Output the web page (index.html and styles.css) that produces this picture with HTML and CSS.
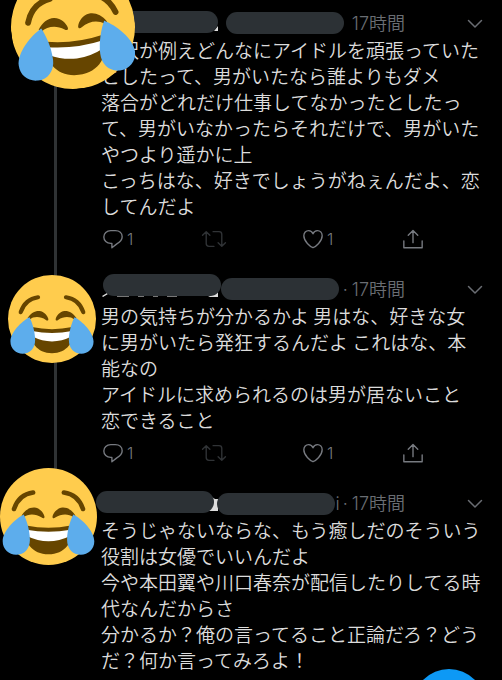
FILE: index.html
```html
<!DOCTYPE html>
<html lang="ja">
<head>
<meta charset="utf-8">
<meta name="viewport" content="width=device-width, initial-scale=1">
<title>スレッド</title>
<link rel="stylesheet" href="styles.css">
</head>
<body>
<svg class="defs" aria-hidden="true">
  <symbol id="joy" viewBox="0 0 36 36">
    <circle cx="18" cy="18" r="18" fill="#ffcc4d"/>
    <g fill="none" stroke="#664500" stroke-width="1.7" stroke-linecap="round">
      <path d="M5.2 15.2Q7 9.8 12.3 9.1"/>
      <path d="M30.8 15.2Q29 9.8 23.7 9.1"/>
    </g>
    <path fill="#664500" d="M8 17.6C9.3 15.6 11 14.6 12.8 14.7C14.9 14.9 16.2 16.7 16.5 18C16.6 18.7 16 18.8 15.5 18.4C13.2 16.8 10.5 16.9 8.8 18.2ZM28 17.6C26.7 15.6 25 14.6 23.2 14.7C21.1 14.9 19.8 16.7 19.5 18C19.4 18.7 20 18.8 20.5 18.4C22.8 16.8 25.5 16.9 27.2 18.2Z"/>
    <path fill="#664500" d="M9.7 21.3Q18 23 26.3 21.3C27.6 27.5 24 32 18 32S8.4 27.5 9.7 21.3Z"/>
    <path fill="#fff" d="M9.8 22.9Q18 24.5 26.2 22.9L26 25.2Q22 27.2 18 27.2T10 25.2Z"/>
    <path fill="#5dadec" d="M8.8 17.3C5.5 19 1 23.5 1 27.2C1 30.2 3.3 32.2 6 32.2C9 32.2 11.1 29.9 11.1 26.7C11.1 23 9.8 19.2 8.8 17.3ZM27.2 17.3C30.5 19 35 23.5 35 27.2C35 30.2 32.7 32.2 30 32.2C27 32.2 24.9 29.9 24.9 26.7C24.9 23 26.2 19.2 27.2 17.3Z"/>
  </symbol>
  <symbol id="reply" viewBox="0 0 24 24">
    <path d="M9.5 2.8H14.5C18.9 2.8 22 5.6 22 9.6C22 13.5 19.5 15.5 16.2 17.3L10.8 21.6V16.8H9.5C5.1 16.8 2 13.8 2 9.8S5.1 2.8 9.5 2.8Z"/>
  </symbol>
  <symbol id="retweet" viewBox="0 0 28 24">
    <path d="M1.5 8L5.5 4L9.5 8M5.5 4.5V17Q5.5 20 8.5 20H14M13 4H19.5Q22.5 4 22.5 7V19.5M18.5 16L22.5 20L26.5 16"/>
  </symbol>
  <symbol id="heart" viewBox="0 0 24 24">
    <path d="M12 21.5C9 20.5 2 14.5 2 8.5C2 5 4.3 2.8 7.2 2.8C9.4 2.8 11.2 4.2 12 6.3C12.8 4.2 14.6 2.8 16.8 2.8C19.7 2.8 22 5 22 8.5C22 14.5 15 20.5 12 21.5Z"/>
  </symbol>
  <symbol id="share" viewBox="0 0 24 24">
    <path d="M12 16V2.8M6.8 8L12 2.8L17.2 8M2 14V21.5H22V14"/>
  </symbol>
  <symbol id="chevron" viewBox="0 0 16 10">
    <path d="M1.500 1.500L8 8L14.500 1.500"/>
  </symbol>
</svg>

<main class="thread">
  <article class="tweet">
    <svg class="face face-large" role="img" aria-label="😂"><use href="#joy"/></svg>
    <header class="head">
      <svg class="scrap" viewBox="0 0 240 26" aria-hidden="true"><path fill="#ddd" d="M113 21L117 16V21Z"/></svg>
      <span class="mask mask-a"></span><span class="mask mask-b"></span>
      <time class="time">17時間</time>
      <button class="more" aria-label="メニュー"><svg><use href="#chevron"/></svg></button>
    </header>
    <p class="text">　沢が例えどんなにアイドルを頑張っていた<br>としたって、男がいたなら誰よりもダメ<br>落合がどれだけ仕事してなかったとしたっ<br>て、男がいなかったらそれだけで、男がいた<br>やつより遥かに上<br>こっちはな、好きでしょうがねぇんだよ、恋<br>してんだよ</p>
    <footer class="actions">
      <button class="action" aria-label="返信"><svg><use href="#reply"/></svg>1</button>
      <button class="action dim" aria-label="リツイート"><svg class="wide"><use href="#retweet"/></svg></button>
      <button class="action" aria-label="いいね"><svg><use href="#heart"/></svg>1</button>
      <button class="action" aria-label="共有"><svg><use href="#share"/></svg></button>
    </footer>
  </article>

  <article class="tweet">
    <svg class="face face-small" role="img" aria-label="😂"><use href="#joy"/></svg>
    <header class="head">
      <svg class="scrap" viewBox="0 0 240 26" aria-hidden="true"><path fill="#ddd" d="M1 20L6 17L7 18L2 21ZM107 21L117 16V21Z"/><path fill="#777" d="M16 20H28V21H16ZM37 20H43V21H37ZM52 20H57V21H52ZM66 20H76V21H66Z"/></svg>
      <span class="mask mask-c"></span><span class="mask mask-d"></span>
      <span class="dot">·</span>
      <time class="time">17時間</time>
      <button class="more" aria-label="メニュー"><svg><use href="#chevron"/></svg></button>
    </header>
    <p class="text">男の気持ちが分かるかよ 男はな、好きな女<br>に男がいたら発狂するんだよ これはな、本<br>能なの<br>アイドルに求められるのは男が居ないこと<br>恋できること</p>
    <footer class="actions">
      <button class="action" aria-label="返信"><svg><use href="#reply"/></svg>1</button>
      <button class="action dim" aria-label="リツイート"><svg class="wide"><use href="#retweet"/></svg></button>
      <button class="action" aria-label="いいね"><svg><use href="#heart"/></svg>1</button>
      <button class="action" aria-label="共有"><svg><use href="#share"/></svg></button>
    </footer>
  </article>

  <article class="tweet last">
    <svg class="face face-medium" role="img" aria-label="😂"><use href="#joy"/></svg>
    <header class="head">
      <svg class="scrap" viewBox="0 0 240 26" aria-hidden="true"><path fill="#ddd" d="M108 5L114 9H117V21H108Z"/></svg>
      <span class="mask mask-e"></span><span class="mask mask-f"></span>
      <span class="handle">i</span><span class="dot">·</span>
      <time class="time">17時間</time>
      <button class="more" aria-label="メニュー"><svg><use href="#chevron"/></svg></button>
    </header>
    <p class="text">そうじゃないならな、もう癒しだのそういう<br>役割は女優でいいんだよ<br>今や本田翼や川口春奈が配信したりしてる時<br>代なんだからさ<br>分かるか？俺の言ってること正論だろ？どう<br>だ？何か言ってみろよ！</p>
  </article>
</main>
<button class="compose" aria-label="ツイートする"></button>
</body>
</html>
```
FILE: styles.css
```css
* {
  box-sizing: border-box;
}

body {
  margin: 0;
  background: #000;
  color: #dcdcdc;
  font-family: "Noto Sans CJK JP", sans-serif;
  font-weight: 350;
}

.defs {
  position: absolute;
  width: 0;
  height: 0;
}

button {
  padding: 0;
  border: 0;
  background: none;
  color: inherit;
  font: inherit;
}

svg {
  display: block;
  fill: none;
  stroke-linecap: round;
  stroke-linejoin: round;
}

.thread {
  padding-top: 10px;
}

.tweet {
  position: relative;
  padding: 0 0 17px 101px;
}

/* Line that joins the avatars of the thread */
.tweet:not(.last)::before {
  content: "";
  position: absolute;
  top: 20px;
  bottom: -20px;
  left: 54px;
  width: 3px;
  background: #2f3234;
}

.tweet.last {
  padding-bottom: 0;
}

.face {
  position: absolute;
  z-index: 2;
}

.face-large {
  top: -45px;
  left: 11px;
  width: 124px;
  height: 124px;
  transform: rotate(-7deg);
}

.face-small {
  top: -1px;
  left: 8px;
  width: 88px;
  height: 88px;
}

.face-medium {
  top: -22px;
  left: 0;
  width: 97px;
  height: 97px;
}

.head {
  position: relative;
  display: flex;
  align-items: center;
  justify-content: flex-end;
  height: 27px;
  padding-right: 19px;
  color: #6a6d73;
  font-family: Inter, "Noto Sans CJK JP", sans-serif;
  font-size: 18px;
  line-height: 26px;
}

.time {
  margin-right: 62px;
}

.dot {
  margin-right: 4px;
}

.handle {
  margin-right: 3px;
}

.more svg {
  width: 16px;
  height: 10px;
  stroke: #6a6d73;
  stroke-width: 1.5;
}

.scrap {
  position: absolute;
  top: 0;
  left: 0;
  width: 240px;
  height: 26px;
}

/* Pills that cover the account names */
.mask {
  position: absolute;
  width: 118px;
  height: 22px;
  border-radius: 11px;
  background: #2c3135;
}

.mask-a {
  top: 1px;
  left: -1px;
}

.mask-b {
  top: 2px;
  left: 125px;
}

.mask-c {
  top: -2px;
  left: 2px;
}

.mask-d {
  top: 2px;
  left: 120px;
}

.mask-e {
  top: 1px;
  left: -5px;
}

.mask-f {
  top: 3px;
  left: 116px;
}

.text {
  margin: 0;
  font-size: 19px;
  line-height: 26px;
  white-space: nowrap;
}

.actions {
  display: grid;
  grid-template-columns: repeat(4, 100px);
  align-items: center;
  height: 40px;
  color: #777a80;
}

.action {
  display: flex;
  align-items: center;
  gap: 3px;
  padding-left: 1px;
  font-family: Inter, "Noto Sans CJK JP", sans-serif;
  font-size: 16px;
  line-height: 24px;
}

.action svg {
  width: 22px;
  height: 22px;
  stroke: #777a80;
  stroke-width: 1.5;
}

.action.dim {
  padding-left: 0;
}

.action .wide {
  width: 26px;
}

.action.dim svg {
  stroke: #303336;
}

.compose {
  position: fixed;
  right: 17px;
  bottom: -61px;
  width: 72px;
  height: 72px;
  border-radius: 50%;
  background: #0d99f5;
}
```
